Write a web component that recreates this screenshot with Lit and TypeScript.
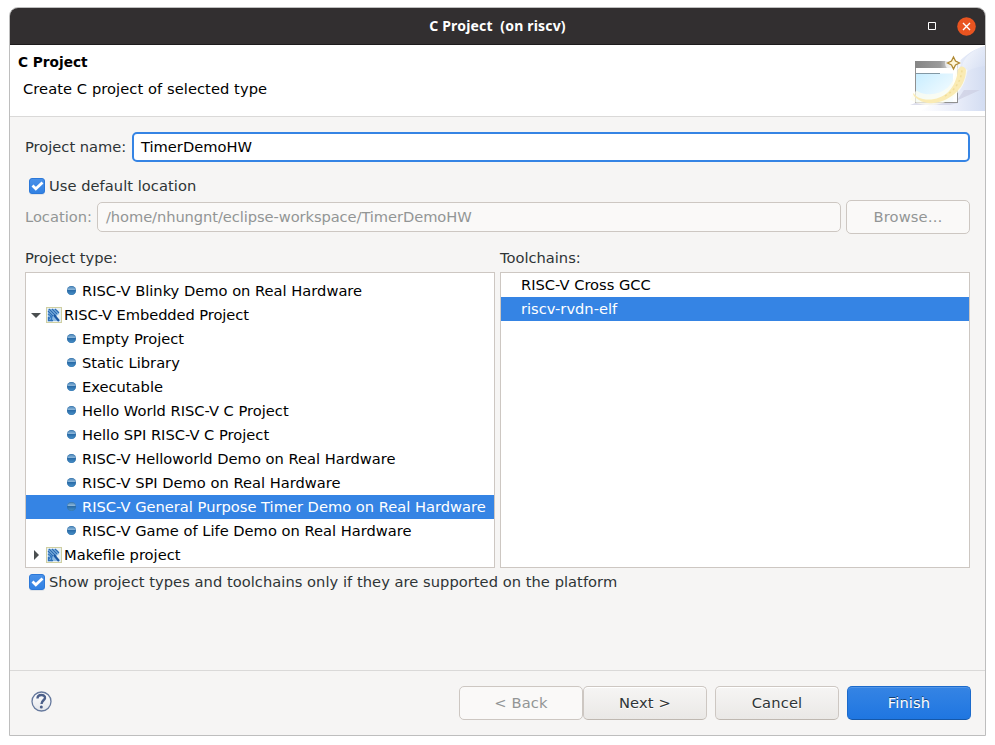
import { LitElement, html, css, svg } from "lit";
import { customElement } from "lit/decorators.js";
import { classMap } from "lit/directives/class-map.js";

type Row = { label: string; kind: "leaf" | "open" | "closed"; selected?: boolean };

const PROJECT_TYPES: Row[] = [
  { label: "RISC-V Blinky Demo on Real Hardware", kind: "leaf" },
  { label: "RISC-V Embedded Project", kind: "open" },
  { label: "Empty Project", kind: "leaf" },
  { label: "Static Library", kind: "leaf" },
  { label: "Executable", kind: "leaf" },
  { label: "Hello World RISC-V C Project", kind: "leaf" },
  { label: "Hello SPI RISC-V C Project", kind: "leaf" },
  { label: "RISC-V Helloworld Demo on Real Hardware", kind: "leaf" },
  { label: "RISC-V SPI Demo on Real Hardware", kind: "leaf" },
  { label: "RISC-V General Purpose Timer Demo on Real Hardware", kind: "leaf", selected: true },
  { label: "RISC-V Game of Life Demo on Real Hardware", kind: "leaf" },
  { label: "Makefile project", kind: "closed" },
];

const ball = (dim = false) => html`<svg class="ball" width="9" height="9" viewBox="0 0 9 9">
  <defs>
    <linearGradient id="b" x1="0" y1="0" x2="0" y2="1">
      <stop offset="0" stop-color=${dim ? "#3a70a4" : "#4583b8"} />
      <stop offset=".4" stop-color=${dim ? "#6a9cc8" : "#8ab4d8"} />
      <stop offset=".5" stop-color=${dim ? "#2b6294" : "#2a6ca8"} />
      <stop offset="1" stop-color=${dim ? "#3b7fbd" : "#4a93cb"} />
    </linearGradient>
  </defs>
  <ellipse cx="4.500" cy="4.500" rx="4.500" ry="4.500" fill="url(#b)" />
  <circle cx="4.500" cy="4.500" r="4.100" fill="none" stroke="#2f6ea8" stroke-width=".7" opacity=".7" />
</svg>`;

const folder = html`<svg class="folder" width="16" height="16" viewBox="0 0 16 16">
  <rect x=".5" y=".5" width="15" height="15" fill="#e6eff3" stroke="#cfcfa2" />
  <path d="M2 2H9Q13 3 13 6Q13 8 10 9L13 14H2Z" fill="#8ebbe4" />
  <path d="M3 2L10 9M6 2L11 7M9 2L13 6M2 4L7 9" fill="none" stroke="#2c6cb3" stroke-width="1.100" />
  <path d="M2 7L5 9L3 12M6 9L5 14" fill="none" stroke="#3478c0" stroke-width="1.300" />
  <path d="M8 8L13 14" stroke="#1d58a4" stroke-width="2.200" />
  <path d="M2.500 10V13.500H7" fill="none" stroke="#2f70b8" stroke-width="1.300" />
</svg>`;

const check = html`<svg class="check" width="16" height="17" viewBox="0 0 16 17">
  <defs>
    <linearGradient id="c" x1="0" y1="0" x2="0" y2="1">
      <stop offset="0" stop-color="#4a91e8" />
      <stop offset="1" stop-color="#3181e3" />
    </linearGradient>
  </defs>
  <rect x="0" y="1" width="16" height="16" rx="3" fill="#dfe3e8" />
  <rect x=".5" y=".5" width="15" height="15" rx="2.5" fill="url(#c)" stroke="#2c78d8" />
  <path d="M3.500 7.500L6.800 10.700L13.500 4.500" fill="none" stroke="#fff" stroke-width="2.800" />
</svg>`;

const banner = svg`
  <defs>
    <linearGradient id="sky" x1="0" y1="0" x2="1" y2="1">
      <stop offset="0" stop-color="#ffffff" />
      <stop offset="1" stop-color="#d3ddf3" />
    </linearGradient>
    <linearGradient id="fade" x1="0" y1="0" x2="1" y2="0">
      <stop offset="0" stop-color="#ffffff" />
      <stop offset=".5" stop-color="#eceffa" />
      <stop offset="1" stop-color="#d3ddf2" />
    </linearGradient>
    <linearGradient id="bar" x1="0" y1="0" x2="1" y2="0">
      <stop offset="0" stop-color="#858585" />
      <stop offset=".65" stop-color="#9b9b9b" />
      <stop offset="1" stop-color="#f4f4f4" />
    </linearGradient>
    <linearGradient id="pane" x1="0" y1="0" x2="1" y2="1">
      <stop offset="0" stop-color="#c8edff" />
      <stop offset="1" stop-color="#fbfeff" />
    </linearGradient>
  </defs>
  <path d="M75 1V66H10C38 55 32 14 75 1Z" fill="url(#fade)" />
  <path d="M75 1V21C66 22 60 24 54 29C48 20 57 6 75 1Z" fill="url(#sky)" opacity=".7" />
  <path d="M0 60L8 57H48V54L54 45H70L48 55V58L40 60Z" fill="#cbcce0" opacity=".65" />
  <rect x="5.500" y="16.500" width="42" height="41" fill="#fff" stroke="#909090" />
  <path d="M5 16H44V23H5Z" fill="url(#bar)" />
  <path d="M6 28.500H43V57H6Z" fill="url(#pane)" />
  <path d="M6 28.500H30" stroke="#8298a4" />
  <path d="M3 50C17 60 48 56 52 24" fill="none" stroke="#fffdf0" stroke-width="11" opacity=".7" />
  <path d="M3 48C6 51 8 53 13 54C30 57 46 47 48 24C50 20 55 21 56 25C56 50 25 65 9 55C6 53 3 51 3 48Z" fill="#faebb4" />
  <path d="M35 51C46 45 51 35 52 25" fill="none" stroke="#f1dd98" stroke-width="1.500" stroke-dasharray="2 3" />
  <circle cx="43" cy="18" r="8" fill="#fff" opacity=".65" />
  <path d="M43.500 12L45.500 16L49.500 18L45.500 20L43.500 24L41.500 20L37.500 18L41.500 16Z" fill="#fff6d8" stroke="#b08a35" stroke-width="1.300" />
`;

@customElement("app-root")
export class AppRoot extends LitElement {
  static styles = css`
    :host { display: block; height: 745px; box-sizing: border-box; padding: 7px 9px 9px; background: #fff;
      font: 14.667px/24px "DejaVu Sans", sans-serif; color: #2e3436; overflow: hidden; }
    * { box-sizing: border-box; }
    svg { display: block; flex: none; }
    .window { width: 977px; height: 729px; border: 1px solid #bebebe; border-radius: 9px 9px 0 0;
      background: #f6f5f4; display: flex; flex-direction: column; overflow: hidden; white-space: nowrap; }
    .titlebar { height: 37px; flex: none; background: #322f30; border-bottom: 1px solid #1d1b1c; color: #fff;
      display: grid; grid-template-columns: 1fr auto 1fr; align-items: center; }
    .title { grid-column: 2; font: bold 14px/36px "Noto Sans", sans-serif; letter-spacing: .18px; white-space: pre; }
    .controls { display: flex; justify-content: flex-end; align-items: center; gap: 20px; padding-right: 9px; }
    .header { height: 72px; flex: none; background: #fff; border-bottom: 1px solid #dad9d8; color: #000;
      display: flex; justify-content: space-between; }
    .heading { padding: 5px 0 0 8px; }
    .heading b { display: block; font-size: 13.700px; }
    .sub { padding: 3px 0 0 5px; letter-spacing: .07px; }
    .body { flex: 1; padding: 15px 15px 0; }
    .line { display: flex; align-items: center; }
    .label { width: 102px; }
    .field { flex: 1; height: 30px; border-radius: 5px; display: flex; align-items: center; }
    .focus { border: 2px solid #3584e4; background: #fff; color: #000; padding-left: 7px; margin-left: 5px; }
    .disabled { color: #929595; }
    .disabled .field { border: 1px solid #cdc7c2; background: #faf9f8; padding-left: 8px; margin: 0 5px; letter-spacing: -.07px; }
    .option { padding-left: 4px; gap: 4px; height: 24px; letter-spacing: .04px; }
    .first { margin-top: 12px; }
    .location { margin-top: 2px; }
    .btn { width: 124px; height: 34px; border: 1px solid #cdc7c2; border-bottom-color: #bfb8b1; border-radius: 5px;
      display: flex; justify-content: center; align-items: center; letter-spacing: .15px;
      background: linear-gradient(#f6f5f4, #eae8e6); box-shadow: inset 0 1px #fff; text-shadow: 0 1px #fff; }
    .btn.off { background: #faf9f8; border-color: #cdc7c2; color: #929595; box-shadow: none; text-shadow: none; }
    .btn.primary { background: linear-gradient(#3584e4, #1f76e1); border-color: #1b6acb; border-bottom-color: #1558aa;
      color: #fff; box-shadow: inset 0 1px #5094e7; text-shadow: 0 -1px rgba(0,0,0,.5); }
    .lists { display: grid; grid-template-columns: 470px 470px; gap: 0 5px; margin-top: 12px; }
    .list { height: 296px; border: 1px solid #cdc7c2; background: #fff; color: #000; margin-top: 2px; overflow: hidden; }
    .tree { padding-top: 6px; }
    .row { height: 24px; display: flex; align-items: center; }
    .leaf { padding-left: 41px; gap: 6px; }
    .leaf .ball { margin-bottom: 1px; }
    .group { padding-left: 5px; gap: 5px; }
    .group .name { margin-left: -3px; }
    .open .name { letter-spacing: -.08px; }
    .chain { padding-left: 20px; }
    .selected { background: #3584e4; color: #fff; }
    .last { margin-top: 2px; }
    .footer { height: 65px; flex: none; border-top: 1px solid #dad9d8; display: flex; align-items: center;
      padding: 0 14px 0 20.500px; }
    .help { margin: 0 auto 3px 0; }
    .gap { margin-left: 8px; }
  `;

  private row(r: Row) {
    const leaf = r.kind === "leaf";
    return html`<div class=${classMap({ row: true, leaf, group: !leaf, open: r.kind === "open", selected: !!r.selected })}>${leaf
      ? ball(!!r.selected)
      : html`<svg width="10" height="10" viewBox="0 0 10 10"><path d=${r.kind === "open" ? "M0 3H10L5 8Z" : "M3 0L8 5L3 10Z"} fill="#4a4f50" /></svg>${folder}`}<span class="name">${r.label}</span></div>`;
  }

  render() {
    return html`<div class="window">
      <div class="titlebar">
        <span class="title">C Project  (on riscv)</span>
        <div class="controls">
          <svg width="9" height="9" viewBox="0 0 9 9"><path d="M1 1H8V8H1Z" transform="translate(-.5 -.5)" fill="none" stroke="#fff" /></svg>
          <svg width="19" height="19" viewBox="0 0 19 19"><circle cx="9.500" cy="9.500" r="9.300" fill="#e95420" /><path d="M6 6L13 13M13 6L6 13" stroke="#fff" stroke-width="1.400" /></svg>
        </div>
      </div>
      <div class="header">
        <div class="heading"><b>C Project</b><div class="sub">Create C project of selected type</div></div>
        <svg width="75" height="66" viewBox="0 0 75 66">${banner}</svg>
      </div>
      <div class="body">
        <div class="line"><span class="label">Project name:</span><div class="field focus">TimerDemoHW</div></div>
        <div class="line option first">${check}<span>Use default location</span></div>
        <div class="line location disabled"><span>Location:</span><div class="field">/home/nhungnt/eclipse-workspace/TimerDemoHW</div><div class="btn off">Browse…</div></div>
        <div class="lists">
          <div>Project type:<div class="list tree">${PROJECT_TYPES.map((r) => this.row(r))}</div></div>
          <div>Toolchains:<div class="list"><div class="row chain">RISC-V Cross GCC</div><div class="row chain selected">riscv-rvdn-elf</div></div></div>
        </div>
        <div class="line option last">${check}<span>Show project types and toolchains only if they are supported on the platform</span></div>
      </div>
      <div class="footer">
        <svg class="help" width="21" height="21" viewBox="0 0 21 21">
          <defs><linearGradient id="h" x1="0" y1="0" x2="0" y2="1"><stop offset="0" stop-color="#fff" /><stop offset="1" stop-color="#e3e5ea" /></linearGradient></defs>
          <circle cx="10.500" cy="10.500" r="9.500" fill="url(#h)" stroke="#66799d" stroke-width="1.300" />
          <path d="M6.500 7.500C6.500 2.800 14.500 3 14 7C13.700 9.300 10.500 9.500 10.500 13" fill="none" stroke="#4c5f89" stroke-width="2.400" />
          <circle cx="10.300" cy="16" r="1.500" fill="#4c5f89" />
        </svg>
        <div class="btn off">&lt; Back</div><div class="btn">Next &gt;</div><div class="btn gap">Cancel</div><div class="btn primary gap">Finish</div>
      </div>
    </div>`;
  }
}
